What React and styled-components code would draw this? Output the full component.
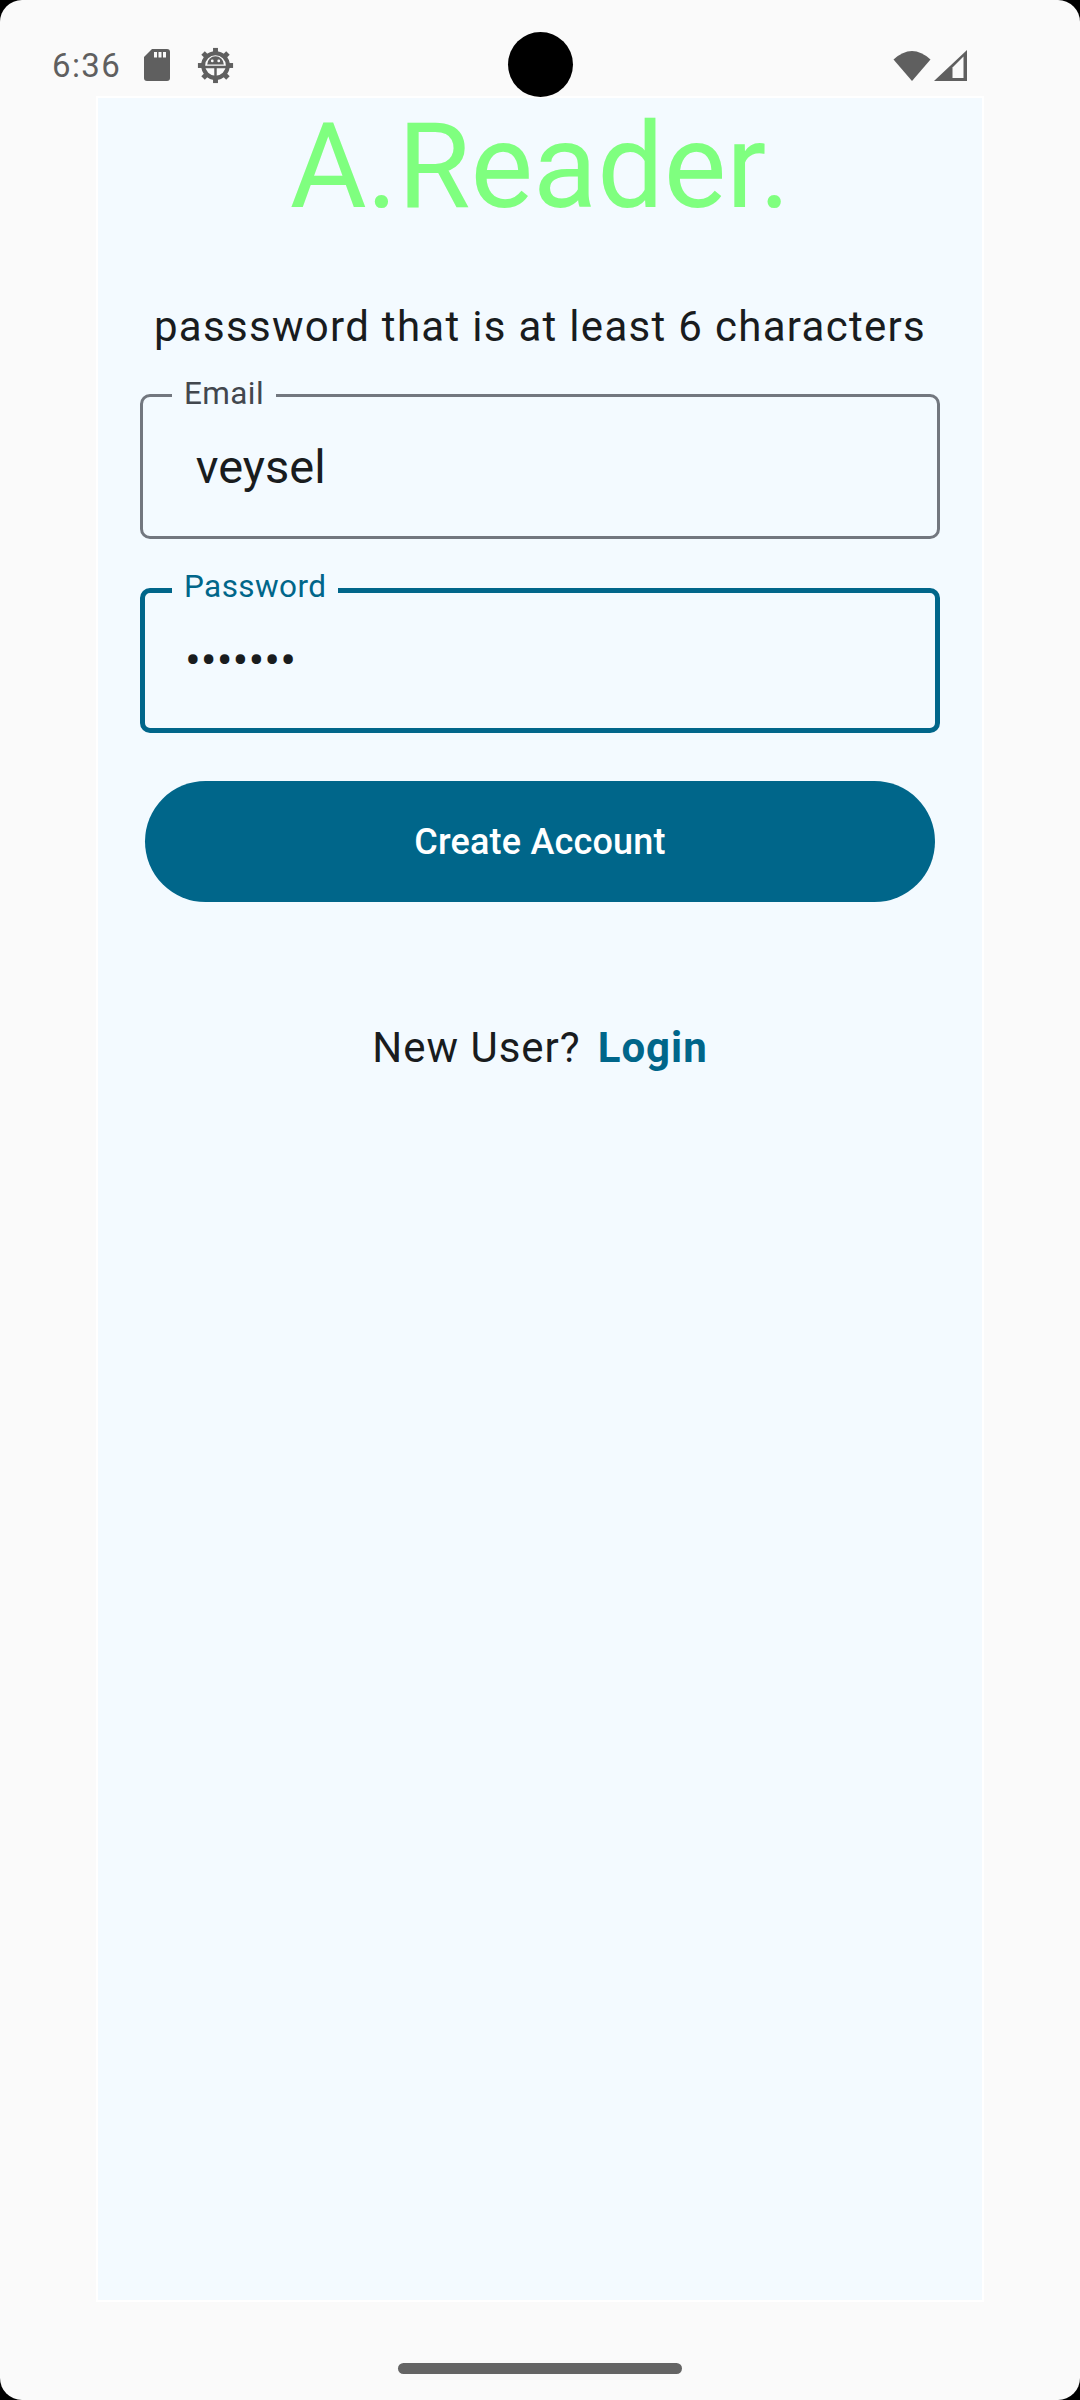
import styled, { createGlobalStyle } from "styled-components";

const GlobalStyle = createGlobalStyle`
  body {
    margin: 0;
    background: #000;
    font-family: Roboto, "Noto Sans", sans-serif;
  }
`;

const Screen = styled.div`
  width: 1080px;
  height: 2400px;
  background: #fafafa;
  border-radius: 22px;
  overflow: hidden;
  position: relative;
  display: flex;
  flex-direction: column;
`;

const StatusBar = styled.div`
  height: 96px;
  box-sizing: border-box;
  padding: 34px 113px 0 52px;
  display: flex;
  align-items: center;
  justify-content: space-between;
`;

const StatusGroup = styled.div`
  display: flex;
  align-items: center;
  gap: ${(p) => p.$gap || 0}px;
`;

const Time = styled.span`
  font-size: 33px;
  line-height: 1;
  letter-spacing: 1.4px;
  color: #5f5f5f;
  margin-right: 23px;
`;

const Spacer = styled.span`
  width: ${(p) => p.$w}px;
`;

const Camera = styled.div`
  position: absolute;
  left: 508px;
  top: 32px;
  width: 65px;
  height: 65px;
  border-radius: 50%;
  background: #000;
`;

const Panel = styled.div`
  margin: 0 96px;
  height: 2206px;
  box-sizing: border-box;
  border: 2px solid #ffffff;
  background: #f3faff;
  display: flex;
  flex-direction: column;
  align-items: center;
`;

const Title = styled.h1`
  margin: 0;
  font-size: 118px;
  font-weight: 400;
  line-height: normal;
  color: #7fff7f;
`;

const Hint = styled.p`
  margin: 66px 0 0;
  font-size: 42px;
  line-height: normal;
  letter-spacing: 1.3px;
  color: #191c1e;
`;

const Field = styled.div`
  position: relative;
  align-self: stretch;
  margin: ${(p) => p.$top}px 42px 0;
  height: 145px;
  box-sizing: border-box;
  border: ${(p) => (p.$focused ? 5 : 3)}px solid
    ${(p) => (p.$focused ? "#00668a" : "#72777f")};
  border-radius: 10px;
  display: flex;
  align-items: center;
  padding-left: ${(p) => (p.$focused ? 40 : 41)}px;
  padding-bottom: ${(p) => p.$lift || 0}px;
`;

const FieldLabel = styled.span`
  position: absolute;
  top: ${(p) => (p.$focused ? -22.5 : -19.5)}px;
  left: ${(p) => (p.$focused ? 27 : 29)}px;
  padding: 0 12px;
  background: #f3faff;
  font-size: 31.5px;
  line-height: 1;
  letter-spacing: 0.4px;
  color: ${(p) => (p.$focused ? "#00668a" : "#42474e")};
`;

const FieldValue = styled.span`
  font-size: 47px;
  line-height: normal;
  white-space: pre;
  color: #191c1e;
`;

const PrimaryButton = styled.button`
  align-self: stretch;
  margin: 48px 47px 0;
  height: 121px;
  border: none;
  border-radius: 61px;
  background: #00668a;
  color: #ffffff;
  font-family: Roboto, "Noto Sans", sans-serif;
  font-size: 36px;
  font-weight: 500;
  letter-spacing: 0.2px;
  cursor: pointer;
`;

const SwitchRow = styled.div`
  margin-top: 121px;
  display: flex;
  align-items: baseline;
  gap: 17px;
  font-size: 42px;
  line-height: normal;
  letter-spacing: 1px;
`;

const Muted = styled.span`
  color: #191c1e;
`;

const LinkText = styled.a`
  color: #00668a;
  font-weight: 700;
  text-decoration: none;
  cursor: pointer;
`;

const NavArea = styled.div`
  flex: 1;
  display: flex;
  justify-content: center;
  padding-top: 61px;
`;

const HomeBar = styled.div`
  width: 284px;
  height: 11px;
  border-radius: 6px;
  background: #646464;
`;

const SdCardIcon = () => (
  <svg width="26" height="32" viewBox="0 0 26 32">
    <path
      d="M8 0 H23 Q26 0 26 3 V29 Q26 32 23 32 H3 Q0 32 0 29 V8 Z"
      fill="#5f5f5f"
    />
    <rect x="10" y="3" width="3" height="5.5" fill="#fafafa" />
    <rect x="14.5" y="3" width="3" height="5.5" fill="#fafafa" />
    <rect x="19" y="3" width="3" height="5.5" fill="#fafafa" />
  </svg>
);

const GearIcon = () => (
  <svg width="37" height="37" viewBox="0 0 24 24">
    {[0, 45, 90, 135, 180, 225, 270, 315].map((a) => (
      <rect
        key={a}
        x="10.4"
        y="0.6"
        width="3.2"
        height="3.6"
        fill="#5f5f5f"
        transform={`rotate(${a} 12 12)`}
      />
    ))}
    <circle cx="12" cy="12" r="8" fill="none" stroke="#5f5f5f" strokeWidth="2.6" />
    <path d="M6.6 11.4 A5.4 5.4 0 0 1 17.4 11.4 Z" fill="#5f5f5f" />
    <circle cx="9.9" cy="9" r="0.9" fill="#fafafa" />
    <circle cx="14.1" cy="9" r="0.9" fill="#fafafa" />
    <line x1="5" y1="13" x2="19" y2="13" stroke="#5f5f5f" strokeWidth="1.6" />
    <line x1="12" y1="13" x2="12" y2="19.5" stroke="#5f5f5f" strokeWidth="1.6" />
  </svg>
);

const WifiIcon = () => (
  <svg width="38" height="32" viewBox="0 0 38 32">
    <path d="M19 32 L0.5 10.5 Q19 -6.5 37.5 10.5 Z" fill="#5f5f5f" />
  </svg>
);

const SignalIcon = () => (
  <svg width="33" height="31" viewBox="0 0 33 31">
    <path d="M0 31 H33 V0 Z" fill="#5f5f5f" />
    <path d="M18.5 28 H29.5 V6.5 L18.5 17.5 Z" fill="#fafafa" />
  </svg>
);

const App = () => {
  return (
    <>
      <GlobalStyle />
      <Screen>
        <StatusBar>
          <StatusGroup>
            <Time>6:36</Time>
            <SdCardIcon />
            <Spacer $w={27} />
            <GearIcon />
          </StatusGroup>
          <StatusGroup $gap={3}>
            <WifiIcon />
            <SignalIcon />
          </StatusGroup>
        </StatusBar>
        <Camera />

        <Panel>
          <Title>A.Reader.</Title>
          <Hint>passsword that is at least 6 characters</Hint>

          <Field $top={43}>
            <FieldLabel>Email</FieldLabel>
            <FieldValue> veysel</FieldValue>
          </Field>

          <Field $top={49} $focused $lift={3}>
            <FieldLabel $focused>Password</FieldLabel>
            <FieldValue>•••••••</FieldValue>
          </Field>

          <PrimaryButton type="button">Create Account</PrimaryButton>

          <SwitchRow>
            <Muted>New User?</Muted>
            <LinkText>Login</LinkText>
          </SwitchRow>
        </Panel>

        <NavArea>
          <HomeBar />
        </NavArea>
      </Screen>
    </>
  );
};

export default App;
